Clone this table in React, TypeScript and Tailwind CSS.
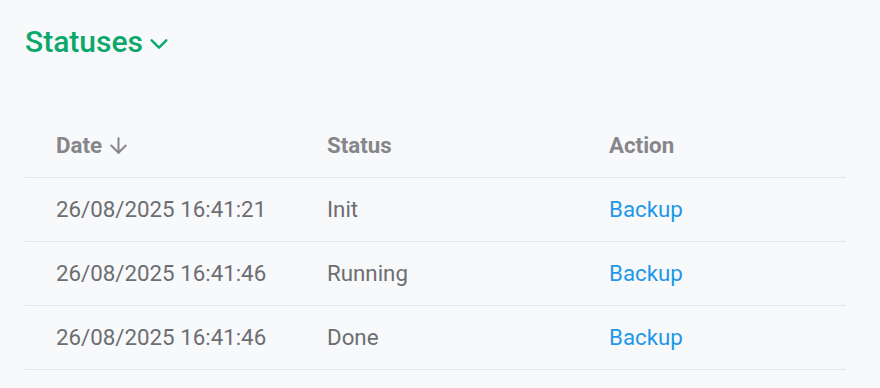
import { ArrowDown } from 'lucide-react';

const rows = [
  { date: '26/08/2025 16:41:21', status: 'Init' },
  { date: '26/08/2025 16:41:46', status: 'Running' },
  { date: '26/08/2025 16:41:46', status: 'Done' },
];

export default function App() {
  return (
    <div
      className="w-[880px] h-[388px] bg-[#f8f9fb] overflow-hidden"
      style={{ fontFamily: 'Roboto, "Liberation Sans", sans-serif' }}
    >
      <div className="pt-[22px] pl-[25px] pr-[34px]">
        <button className="flex items-center gap-[5px] text-[#0aa86b] font-medium text-[30px] leading-[40px]">
          Statuses
          <svg width="22" height="22" viewBox="0 0 24 24" fill="none" stroke="currentColor" strokeWidth="2.6" strokeLinecap="round" strokeLinejoin="round" className="mt-[3px]">
            <path d="M4 8l8 8 8-8" />
          </svg>
        </button>

        <table className="mt-[51px] w-[821px] border-collapse text-[22.3px]">
          <thead>
            <tr className="border-b border-[#e3e5e9] h-[64px]">
              <th className="w-[271px] pl-[31px] pt-[2px] text-left font-bold text-[22.3px] text-[#86868b]">
                <span className="inline-flex items-center gap-[4px]">
                  Date
                  <ArrowDown size={25} strokeWidth={1.9} />
                </span>
              </th>
              <th className="w-[282px] pl-[31px] pt-[2px] text-left font-bold text-[22.3px] text-[#86868b]">Status</th>
              <th className="pl-[31px] pt-[2px] text-left font-bold text-[22.3px] text-[#86868b]">Action</th>
            </tr>
          </thead>
          <tbody>
            {rows.map((r, i) => (
              <tr key={i} className="border-b border-[#e3e5e9] h-[64px]">
                <td className="pl-[31px] pt-[2px] text-[#6d6d72]">{r.date}</td>
                <td className="pl-[31px] pt-[2px] text-[#6d6d72]">{r.status}</td>
                <td className="pl-[31px] pt-[2px]">
                  <a className="text-[#1f97ea] cursor-pointer">Backup</a>
                </td>
              </tr>
            ))}
          </tbody>
        </table>
      </div>
    </div>
  );
}
